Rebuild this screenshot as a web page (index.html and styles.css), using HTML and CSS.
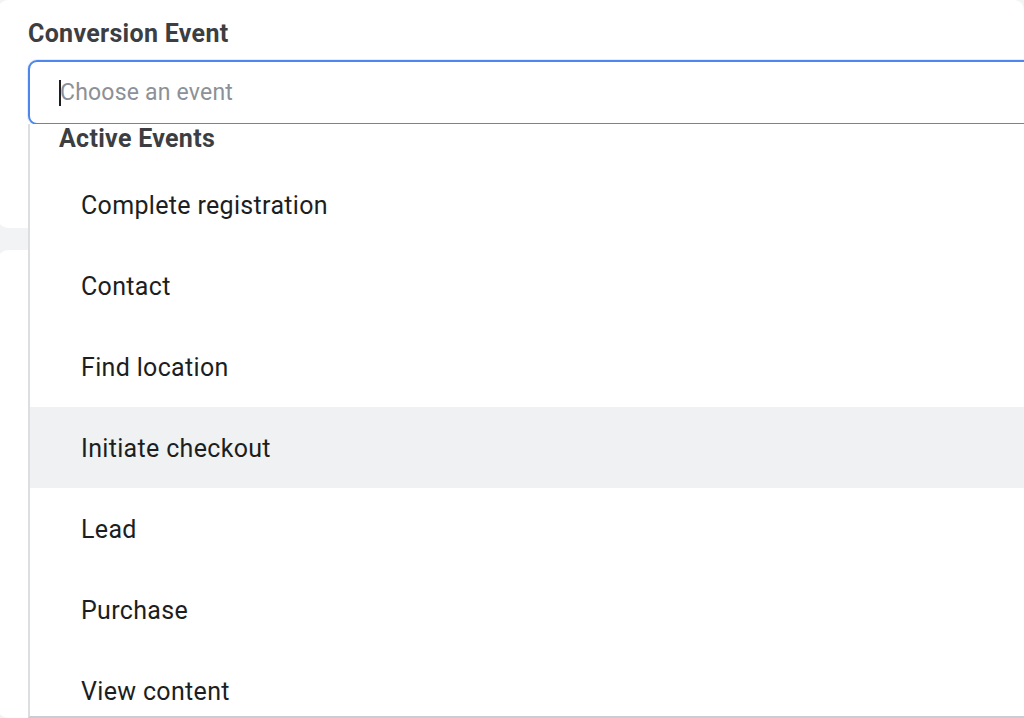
FILE: index.html
```html
<!DOCTYPE html>
<html lang="en">
<head>
<meta charset="utf-8">
<title>Conversion Event</title>
<link rel="stylesheet" href="styles.css">
</head>
<body>
<div class="page">
  <section class="card card-top">
    <div class="field">
      <label class="label">Conversion Event</label>
      <div class="combo">
        <div class="input"><span class="caret"></span><span class="placeholder">Choose an event</span></div>
        <div class="menu">
          <div class="menu-header">Active Events</div>
          <div class="item">Complete registration</div>
          <div class="item">Contact</div>
          <div class="item">Find location</div>
          <div class="item item-hover">Initiate checkout</div>
          <div class="item">Lead</div>
          <div class="item">Purchase</div>
          <div class="item">View content</div>
        </div>
      </div>
    </div>
  </section>
  <section class="card card-bottom"></section>
</div>
</body>
</html>
```

FILE: styles.css
```css
html, body {
  margin: 0;
  padding: 0;
}
body {
  width: 1024px;
  height: 718px;
  overflow: hidden;
  background: #f2f3f5;
  font-family: Roboto, "Liberation Sans", Arial, sans-serif;
}
.page {
  display: flex;
  flex-direction: column;
  gap: 22px;
  width: 1024px;
  height: 718px;
  overflow: hidden;
}
.card {
  background: #ffffff;
  border-radius: 10px;
  margin-left: -2px;
}
.card-top {
  flex: 0 0 228px;
  position: relative;
  z-index: 2;
}
.card-bottom {
  flex: 1 0 auto;
}
.field {
  padding: 20px 0 0 30px;
}
.label {
  display: block;
  font-size: 25px;
  line-height: 28px;
  font-weight: 700;
  color: #3c3e42;
  letter-spacing: 0.3px;
  margin-bottom: 12px;
}
.combo {
  position: relative;
}
.input {
  box-sizing: border-box;
  height: 65px;
  width: 1100px;
  border: 2px solid #4d86ec;
  border-radius: 9px;
  box-shadow: 0 0 0 1px rgba(77, 134, 236, 0.15);
  display: flex;
  align-items: center;
  padding-left: 29px;
  background: #fff;
}
.caret {
  width: 2px;
  height: 26px;
  background: #1c1e21;
  margin-right: -1px;
}
.placeholder {
  font-size: 23px;
  color: #8d9096;
  letter-spacing: 0.2px;
}
.menu {
  position: absolute;
  top: 64px;
  left: 0;
  width: 1100px;
  height: 592px;
  overflow: hidden;
  background: #ffffff;
  border-left: 2px solid #dcdee2;
  border-bottom: 2px solid #c9ccd1;
}
.menu-header {
  height: 40px;
  line-height: 30px;
  padding-left: 29px;
  font-size: 25px;
  font-weight: 700;
  color: #3c3e42;
  letter-spacing: 0.3px;
}
.item {
  height: 81px;
  line-height: 83px;
  padding-left: 51px;
  font-size: 25px;
  color: #1c1e21;
  letter-spacing: 0.33px;
}
.item-hover {
  background: #f0f1f3;
}
```
